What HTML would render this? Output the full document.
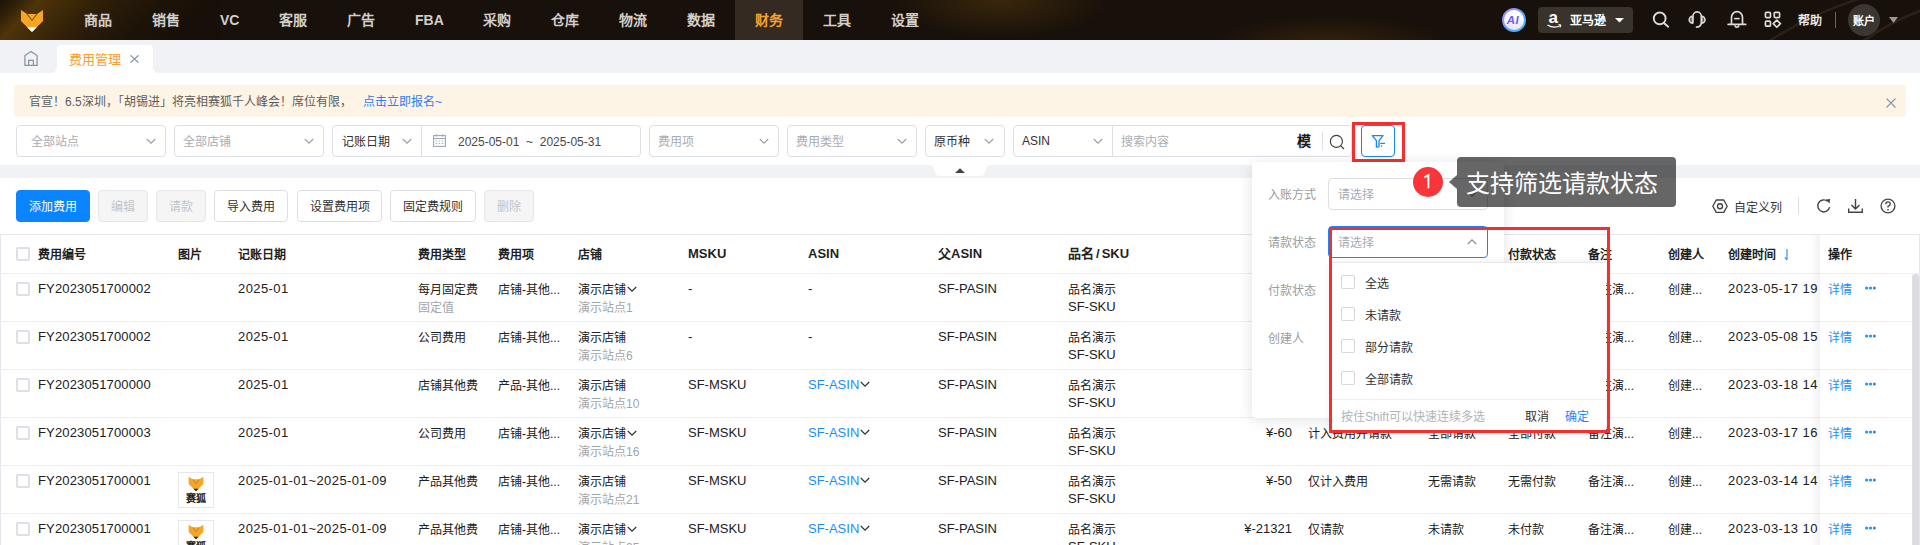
<!DOCTYPE html>
<html lang="zh-CN"><head><meta charset="utf-8">
<style>
*{box-sizing:border-box;margin:0;padding:0}
html,body{width:1920px;height:545px;overflow:hidden;background:#fff}
body{position:relative;font-family:"Liberation Sans",sans-serif;font-size:12px;color:#303133;line-height:1}
.a{position:absolute;white-space:nowrap}
.l{font-size:13px}
#nav{position:absolute;left:0;top:0;width:1920px;height:40px;background:
 radial-gradient(ellipse 110px 38px at 1000px 0px,rgba(85,58,14,.55),rgba(85,58,14,0)),
 radial-gradient(ellipse 120px 26px at 1330px 42px,rgba(80,56,16,.45),rgba(80,56,16,0)),
 #18100a;overflow:hidden}
.glow{position:absolute;left:0;top:0;width:220px;height:40px;background:linear-gradient(135deg,#1d1408 0%,#2e1f08 7%,#503409 15%,#432c09 24%,#2c1d08 42%,#1d1408 62%,#170f08 85%)}
.ni{position:absolute;top:0;height:40px;line-height:40px;font-size:14px;font-weight:bold;color:#d2cec9;padding:0 20px}
.ni.on{background:#352a21;color:#f6a22f}
#tabs{position:absolute;left:0;top:40px;width:1920px;height:33px;background:#f0f2f5}
.sel{position:absolute;top:125px;height:32px;border:1px solid #dcdfe6;border-radius:4px;background:#fff}
.ph{position:absolute;top:9px;left:14px;color:#a9acb2;font-size:12px;white-space:nowrap}
.chev{position:absolute;top:11px;width:9px;height:9px}
.btn{position:absolute;top:190px;height:32px;border:1px solid #dcdfe6;border-radius:4px;background:#fff;font-size:12px;color:#303133;text-align:center;line-height:32px;white-space:nowrap}
.btn.dis{background:#f5f5f6;border-color:#e4e6eb;color:#c0c4cc}
.hl{position:absolute;left:0;width:1920px;height:1px;background:#ebeef5}
.th{position:absolute;top:248px;font-weight:bold;font-size:12px;color:#1f1f1f;white-space:nowrap}
.cb{position:absolute;left:16px;width:14px;height:14px;border:2px solid #dde0e7;border-radius:2px;background:#fff}
.c{position:absolute;white-space:nowrap;color:#202020}
.g{color:#a3a5aa}
.d{letter-spacing:.4px}
.c.l{margin-top:-2px}
div.a,div.c,div.th,span.ph{padding-top:1px}
.bl{color:#1a8cff}
</style></head>
<body>
<!-- NAV -->
<div id="nav">
 <div class="glow"></div>
 <svg class="a" style="left:20px;top:9px" width="24" height="24" viewBox="0 0 24 24">
  <path d="M1 1 L7 5 L17 5 L23 1 L23 12 L12 23 L1 12 Z" fill="#f6a623"/>
  <path d="M7 5 L12 11.5 L17 5" fill="none" stroke="#4a3008" stroke-width="0.85"/>
  <path d="M7.2 18.2 H16.8 L12 23 Z" fill="#fff"/>
 </svg>
 <div class="ni" style="left:64px">商品</div>
 <div class="ni" style="left:132px">销售</div>
 <div class="ni" style="left:200px">VC</div>
 <div class="ni" style="left:259px">客服</div>
 <div class="ni" style="left:327px">广告</div>
 <div class="ni" style="left:395px">FBA</div>
 <div class="ni" style="left:463px">采购</div>
 <div class="ni" style="left:531px">仓库</div>
 <div class="ni" style="left:599px">物流</div>
 <div class="ni" style="left:667px">数据</div>
 <div class="ni on" style="left:735px">财务</div>
 <div class="ni" style="left:803px">工具</div>
 <div class="ni" style="left:871px">设置</div>

 <svg class="a" style="left:1700px;top:0" width="220" height="40" viewBox="0 0 220 40"><path d="M68 42 Q110 14 162 -2" fill="none" stroke="rgba(120,100,75,.2)" stroke-width="2.5"/><path d="M162 42 Q190 22 222 10" fill="none" stroke="rgba(120,100,75,.2)" stroke-width="3"/></svg>
 <div class="a" style="left:1502px;top:8px;width:24px;height:24px;border-radius:50%;background:linear-gradient(135deg,#b58cff,#5aa0ff 60%,#3ad0ff)"></div>
 <div class="a" style="left:1504px;top:10px;width:20px;height:20px;border-radius:50%;background:linear-gradient(180deg,#fff 30%,#e8e2ff)"></div>
 <div class="a" style="left:1507px;top:14px;font-size:11.5px;font-weight:bold;color:#6b5cf2;transform:skewX(-10deg);letter-spacing:.3px">AI</div>
 <div class="a" style="left:1538px;top:7px;width:95px;height:26px;border-radius:4px;background:#3a332b"></div>
 <div class="a" style="left:1548.5px;top:8px;font-size:17px;font-weight:bold;color:#fff">a</div>
 <svg class="a" style="left:1547px;top:24px" width="15" height="5" viewBox="0 0 15 5"><path d="M.5 1 Q7 5 13.5 1.5" fill="none" stroke="#fff" stroke-width="1.3"/><path d="M11.5 .5 L14 1 L13 3.5" fill="none" stroke="#fff" stroke-width="1"/></svg>
 <div class="a" style="left:1570px;top:14px;font-size:12px;font-weight:bold;color:#fff">亚马逊</div>
 <svg class="a" style="left:1615px;top:18px" width="9" height="5" viewBox="0 0 9 5"><path d="M0 0 H9 L4.5 4.5 Z" fill="#fff"/></svg>
 <svg class="a" style="left:1652px;top:11px" width="18" height="18" viewBox="0 0 18 18"><circle cx="7.7" cy="7.4" r="5.9" fill="none" stroke="#dedbd8" stroke-width="1.9"/><path d="M12 12 L16.2 15.7" stroke="#dedbd8" stroke-width="1.9" stroke-linecap="round"/></svg>
 <svg class="a" style="left:1687px;top:10px" width="20" height="19" viewBox="0 0 20 19"><path d="M5.7 6.3 A3.45 3.45 0 0 0 5.7 13.2 Z M14.5 6.3 A3.45 3.45 0 0 1 14.5 13.2 Z" fill="rgba(210,205,200,.35)" stroke="#dedbd8" stroke-width="1.6" stroke-linejoin="round"/><path d="M5.7 12 V7.2 A4.4 5.3 0 0 1 14.5 7.2 V12 Q14.5 16.8 9.5 17.2" fill="none" stroke="#dedbd8" stroke-width="1.7" stroke-linecap="round"/></svg>
 <svg class="a" style="left:1727px;top:9px" width="20" height="20" viewBox="0 0 20 20"><path d="M4.5 15 V8.5 A5.5 5.8 0 0 1 15.5 8.5 V15" fill="none" stroke="#dedbd8" stroke-width="1.7"/><path d="M1.2 15.4 H18.6" stroke="#dedbd8" stroke-width="1.8" stroke-linecap="round"/><path d="M8 16.3 A1.9 1.9 0 0 0 11.8 16.3" fill="none" stroke="#dedbd8" stroke-width="1.5"/><path d="M7.2 9.6 H12.6" stroke="#dedbd8" stroke-width="1.6"/></svg>
 <svg class="a" style="left:1763px;top:10px" width="20" height="20" viewBox="0 0 20 20"><rect x="2.45" y="2.35" width="5" height="5.2" rx="1" fill="none" stroke="#dedbd8" stroke-width="1.7"/><rect x="11.25" y="2.35" width="5.3" height="5.2" rx="1" fill="none" stroke="#dedbd8" stroke-width="1.7"/><rect x="2.45" y="11.15" width="5" height="5" rx="1" fill="none" stroke="#dedbd8" stroke-width="1.7"/><path d="M13.8 10.05 L17.4 13.65 L13.8 17.25 L10.2 13.65 Z" fill="none" stroke="#dedbd8" stroke-width="1.7" stroke-linejoin="round"/></svg>
 <div class="a" style="left:1798px;top:14px;font-size:12px;font-weight:bold;color:#e6e6e6">帮助</div>
 <div class="a" style="left:1835px;top:12px;width:1px;height:16px;background:#6a655f"></div>
 <div class="a" style="left:1848px;top:4px;width:32px;height:32px;border-radius:50%;background:#3b3630"></div>
 <div class="a" style="left:1852.5px;top:15px;font-size:11px;font-weight:bold;color:#fff">账户</div>
 <svg class="a" style="left:1889px;top:17px" width="9" height="6" viewBox="0 0 9 6"><path d="M0 0 H9 L4.5 6 Z" fill="#9a9895"/></svg>
</div>

<!-- TABS -->
<div id="tabs">
 <svg class="a" style="left:23px;top:10px" width="16" height="17" viewBox="0 0 16 17"><path d="M1.9 15.3 V5.6 L8 1.4 L14.1 5.6 V15.3 Z" fill="none" stroke="#8a93a2" stroke-width="1.25" stroke-linejoin="miter"/><path d="M5.6 15.3 V10.4 H10.4 V15.3" fill="none" stroke="#8a93a2" stroke-width="1.2"/></svg>
 <div class="a" style="left:57px;top:5px;width:96px;height:28px;background:#fff;border-radius:4px 4px 0 0"></div>
 <div class="a" style="left:69px;top:12px;color:#fa9d2c;font-size:13px">费用管理</div>
 <svg class="a" style="left:129.5px;top:15px" width="9" height="8" viewBox="0 0 9 8"><path d="M.5 .3 L8.5 7.7 M8.5 .3 L.5 7.7" stroke="#8290a3" stroke-width="1.1"/></svg>
 <div class="a" style="left:51px;top:27px;width:6px;height:6px;background:#fff"></div><div class="a" style="left:51px;top:27px;width:6px;height:6px;background:#f0f2f5;border-bottom-right-radius:6px"></div>
 <div class="a" style="left:153px;top:27px;width:6px;height:6px;background:#fff"></div><div class="a" style="left:153px;top:27px;width:6px;height:6px;background:#f0f2f5;border-bottom-left-radius:6px"></div>
</div>

<!-- BANNER -->
<div class="a" style="left:14px;top:85px;width:1892px;height:32px;background:#fef4e5;border-radius:3px"></div>
<div class="a" style="left:29px;top:95px;color:#5c5c5c">官宣！6.5深圳，「胡锡进」将亮相赛狐千人峰会！席位有限，</div>
<div class="a" style="left:363px;top:95px;color:#2d7df6">点击立即报名~</div>
<svg class="a" style="left:1886px;top:97.5px" width="10" height="10" viewBox="0 0 10 10"><path d="M.5 .5 L9.5 9.5 M9.5 .5 L.5 9.5" stroke="#8a96a8" stroke-width="1.1"/></svg>


<!-- FILTERS -->
<div class="sel" style="left:16px;width:150px"><span class="ph" style="left:14px">全部站点</span></div><svg class="a" style="left:146px;top:137.5px" width="10" height="7" viewBox="0 0 10 7"><path d="M.8 1 L5 5.2 L9.2 1" fill="none" stroke="#9a9ea6" stroke-width="1.1"/></svg>
<div class="sel" style="left:174px;width:150px"><span class="ph" style="left:8px">全部店铺</span></div><svg class="a" style="left:304px;top:137.5px" width="10" height="7" viewBox="0 0 10 7"><path d="M.8 1 L5 5.2 L9.2 1" fill="none" stroke="#9a9ea6" stroke-width="1.1"/></svg>
<div class="sel" style="left:332px;width:309px"><span class="ph" style="left:9px;color:#303133">记账日期</span><div class="a" style="left:88px;top:0;width:1px;height:30px;background:#dcdfe6"></div><span class="ph l" style="left:125px;color:#45484f;top:9px">2025-05-01 &nbsp;~&nbsp; 2025-05-31</span></div><svg class="a" style="left:402px;top:137.5px" width="10" height="7" viewBox="0 0 10 7"><path d="M.8 1 L5 5.2 L9.2 1" fill="none" stroke="#9a9ea6" stroke-width="1.1"/></svg>
<svg class="a" style="left:433px;top:134px" width="13" height="13" viewBox="0 0 13 13"><rect x=".6" y="1.6" width="11.8" height="10.8" fill="none" stroke="#9ea7b4" stroke-width="1.1"/><path d="M.6 4.5 H12.4 M3.5 .3 V2.6 M9.5 .3 V2.6" stroke="#9ea7b4" stroke-width="1.1"/><path d="M2.8 7 H4.2 M5.8 7 H7.2 M8.8 7 H10.2 M2.8 9.5 H4.2 M5.8 9.5 H7.2 M8.8 9.5 H10.2" stroke="#9ea7b4" stroke-width=".9"/></svg>
<div class="sel" style="left:649px;width:130px"><span class="ph" style="left:8px">费用项</span></div><svg class="a" style="left:759px;top:137.5px" width="10" height="7" viewBox="0 0 10 7"><path d="M.8 1 L5 5.2 L9.2 1" fill="none" stroke="#9a9ea6" stroke-width="1.1"/></svg>
<div class="sel" style="left:787px;width:130px"><span class="ph" style="left:8px">费用类型</span></div><svg class="a" style="left:897px;top:137.5px" width="10" height="7" viewBox="0 0 10 7"><path d="M.8 1 L5 5.2 L9.2 1" fill="none" stroke="#9a9ea6" stroke-width="1.1"/></svg>
<div class="sel" style="left:925px;width:80px"><span class="ph" style="left:8px;color:#303133">原币种</span></div><svg class="a" style="left:984px;top:137.5px" width="10" height="7" viewBox="0 0 10 7"><path d="M.8 1 L5 5.2 L9.2 1" fill="none" stroke="#9a9ea6" stroke-width="1.1"/></svg>
<div class="sel" style="left:1013px;width:339px"><span class="ph l" style="left:8px;color:#303133;top:8px">ASIN</span><div class="a" style="left:98px;top:0;width:1px;height:30px;background:#dcdfe6"></div><span class="ph" style="left:107px">搜索内容</span><span class="ph" style="left:283px;top:7px;font-size:14px;font-weight:bold;color:#1a1a1a">模</span><div class="a" style="left:308px;top:6px;width:1px;height:18px;background:#dcdfe6"></div></div><svg class="a" style="left:1093px;top:137.5px" width="10" height="7" viewBox="0 0 10 7"><path d="M.8 1 L5 5.2 L9.2 1" fill="none" stroke="#9a9ea6" stroke-width="1.1"/></svg>
<svg class="a" style="left:1329px;top:134px" width="17" height="17" viewBox="0 0 17 17"><circle cx="7.4" cy="7.4" r="6" fill="none" stroke="#3e3e3e" stroke-width="1.15"/><path d="M11.8 11.8 L15 15" stroke="#3e3e3e" stroke-width="1.2"/></svg>
<div class="a" style="left:1361px;top:125px;width:34px;height:32px;border:1px solid #1a84ff;border-radius:4px;background:#fff"></div>
<svg class="a" style="left:1369px;top:133px" width="17" height="17" viewBox="0 0 17 17"><path d="M3.3 2.6 H14 L10 7.6 V13.6 L7.4 14.2 V7.6 Z" fill="none" stroke="#1a84ff" stroke-width="1.3" stroke-linejoin="round"/><path d="M11.2 10.4 H16" stroke="#1a84ff" stroke-width="1.2"/><circle cx="12.6" cy="13" r=".8" fill="#1a84ff"/></svg>
<div class="a" style="left:1352px;top:122px;width:53px;height:40px;border:3px solid #f3302f"></div>

<!-- BAND -->
<div class="a" style="left:0;top:165px;width:1920px;height:13px;background:#f0f2f5"></div>
<svg class="a" style="left:929px;top:165px" width="62" height="11" viewBox="0 0 62 11"><path d="M0 0 H62 Q58 0 57 4 L56 8 Q55 11 51 11 H11 Q7 11 6 8 L5 4 Q4 0 0 0 Z" fill="#fff"/><path d="M26 8 L31 3.2 L36 8 Z" fill="#444"/></svg>

<!-- BUTTONS -->
<div class="btn" style="left:16px;width:74px;background:#0b84ff;border-color:#0b84ff;color:#fff">添加费用</div>
<div class="btn dis" style="left:98px;width:50px">编辑</div>
<div class="btn dis" style="left:156px;width:50px">请款</div>
<div class="btn" style="left:214px;width:74px">导入费用</div>
<div class="btn" style="left:297px;width:85px">设置费用项</div>
<div class="btn" style="left:390px;width:86px">固定费规则</div>
<div class="btn dis" style="left:484px;width:50px">删除</div>
<svg class="a" style="left:1712px;top:198.5px" width="16" height="15" viewBox="0 0 16 15"><path d="M4.2 1 H11.8 L15.2 7.2 L11.8 13.4 H4.2 L0.8 7.2 Z" fill="none" stroke="#444" stroke-width="1.35" stroke-linejoin="round"/><circle cx="8" cy="7.2" r="2.5" fill="none" stroke="#444" stroke-width="1.35"/></svg>
<div class="a" style="left:1734px;top:201px;color:#333">自定义列</div>
<div class="a" style="left:1798px;top:197px;width:1px;height:17px;background:#dcdfe6"></div>
<svg class="a" style="left:1816px;top:198px" width="16" height="16" viewBox="0 0 16 16"><path d="M13.6 9.2 A6 6 0 1 1 11.6 3.3" fill="none" stroke="#444" stroke-width="1.4"/><path d="M9.8 1.6 L14.2 0.9 L13.4 5.4 Z" fill="#444"/></svg>
<svg class="a" style="left:1847px;top:198px" width="17" height="16" viewBox="0 0 17 16"><path d="M8.5 1 V11 M4.5 7 L8.5 11 L12.5 7 M1.7 10.5 V14.3 H15.3 V10.5" fill="none" stroke="#444" stroke-width="1.45"/></svg>
<svg class="a" style="left:1880px;top:198px" width="16" height="16" viewBox="0 0 16 16"><circle cx="8" cy="8" r="6.9" fill="none" stroke="#444" stroke-width="1.35"/><path d="M5.8 6.2 Q5.8 3.8 8 3.8 Q10.2 3.8 10.2 5.9 Q10.2 7.3 8 8.3 V9.6" fill="none" stroke="#444" stroke-width="1.35"/><circle cx="8" cy="11.8" r=".85" fill="#444"/></svg>

<!-- TABLE -->
<div class="a" style="left:0;top:234px;width:1920px;height:1px;background:#e4e7ed"></div>
<div class="a" style="left:0;top:234px;width:1px;height:311px;background:#e4e7ed"></div>
<div class="a" style="left:1919px;top:234px;width:1px;height:311px;background:#e4e7ed"></div>
<div class="a" style="left:0;top:273px;width:1920px;height:1px;background:#ebeef5"></div>
<div class="a" style="left:0;top:321px;width:1912px;height:1px;background:#ebeef5"></div>
<div class="a" style="left:0;top:369px;width:1912px;height:1px;background:#ebeef5"></div>
<div class="a" style="left:0;top:417px;width:1912px;height:1px;background:#ebeef5"></div>
<div class="a" style="left:0;top:465px;width:1912px;height:1px;background:#ebeef5"></div>
<div class="a" style="left:0;top:513px;width:1912px;height:1px;background:#ebeef5"></div>
<div class="cb" style="top:247px"></div>
<div class="th" style="left:38px">费用编号</div>
<div class="th" style="left:178px">图片</div>
<div class="th" style="left:238px">记账日期</div>
<div class="th" style="left:418px">费用类型</div>
<div class="th" style="left:498px">费用项</div>
<div class="th" style="left:578px">店铺</div>
<div class="th" style="left:688px;font-size:13px;top:246px">MSKU</div>
<div class="th" style="left:808px;font-size:13px;top:246px">ASIN</div>
<div class="th" style="left:938px;font-size:13px;top:246px">父ASIN</div>
<div class="th" style="left:1068px;font-size:13px;top:246px">品名<span style="margin:0 2px">/</span>SKU</div>
<div class="th" style="left:1265px">金额</div>
<div class="th" style="left:1308px">入账方式</div>
<div class="th" style="left:1428px">请款状态</div>
<div class="th" style="left:1508px">付款状态</div>
<div class="th" style="left:1588px">备注</div>
<div class="th" style="left:1668px">创建人</div>
<div class="th" style="left:1728px">创建时间</div>
<div class="th" style="left:1828px">操作</div>
<svg class="a" style="left:1784px;top:249px" width="6" height="12" viewBox="0 0 6 12"><path d="M3 0 V10.5 M.8 8.3 L3 10.8" fill="none" stroke="#3a8ef6" stroke-width="1.2"/></svg>
<div class="cb" style="top:282px"></div>
<div class="c l" style="letter-spacing:.15px;left:38px;top:283px">FY2023051700002</div>
<div class="c l d" style="left:238px;top:283px">2025-01</div>
<div class="c" style="left:418px;top:283px">每月固定费</div>
<div class="c g" style="left:418px;top:301px">固定值</div>
<div class="c" style="left:498px;top:283px">店铺-其他...</div>
<div class="c" style="left:578px;top:283px">演示店铺<svg width="10" height="7" viewBox="0 0 10 7" style="margin-left:1px;vertical-align:1px"><path d="M.8 1 L5 5.2 L9.2 1" fill="none" stroke="#303133" stroke-width="1.2"/></svg></div>
<div class="c g" style="left:578px;top:301px">演示站点1</div>
<div class="c l" style="left:688px;top:283px">-</div>
<div class="c l" style="left:808px;top:283px">-</div>
<div class="c l" style="left:938px;top:283px">SF-PASIN</div>
<div class="c" style="left:1068px;top:283px">品名演示</div>
<div class="c l" style="left:1068px;top:301px">SF-SKU</div>
<div class="c" style="left:1588px;top:283px">备注演...</div>
<div class="c" style="left:1668px;top:283px">创建...</div>
<div class="c l d" style="left:1728px;top:283px">2023-05-17 19</div>
<div class="cb" style="top:330px"></div>
<div class="c l" style="letter-spacing:.15px;left:38px;top:331px">FY2023051700002</div>
<div class="c l d" style="left:238px;top:331px">2025-01</div>
<div class="c" style="left:418px;top:331px">公司费用</div>
<div class="c" style="left:498px;top:331px">店铺-其他...</div>
<div class="c" style="left:578px;top:331px">演示店铺</div>
<div class="c g" style="left:578px;top:349px">演示站点6</div>
<div class="c l" style="left:688px;top:331px">-</div>
<div class="c l" style="left:808px;top:331px">-</div>
<div class="c l" style="left:938px;top:331px">SF-PASIN</div>
<div class="c" style="left:1068px;top:331px">品名演示</div>
<div class="c l" style="left:1068px;top:349px">SF-SKU</div>
<div class="c" style="left:1588px;top:331px">备注演...</div>
<div class="c" style="left:1668px;top:331px">创建...</div>
<div class="c l d" style="left:1728px;top:331px">2023-05-08 15</div>
<div class="cb" style="top:378px"></div>
<div class="c l" style="letter-spacing:.15px;left:38px;top:379px">FY2023051700000</div>
<div class="c l d" style="left:238px;top:379px">2025-01</div>
<div class="c" style="left:418px;top:379px">店铺其他费</div>
<div class="c" style="left:498px;top:379px">产品-其他...</div>
<div class="c" style="left:578px;top:379px">演示店铺</div>
<div class="c g" style="left:578px;top:397px">演示站点10</div>
<div class="c l" style="left:688px;top:379px">SF-MSKU</div>
<div class="c l bl" style="left:808px;top:379px">SF-ASIN<svg width="10" height="7" viewBox="0 0 10 7" style="margin-left:1px;vertical-align:1px"><path d="M.8 1 L5 5.2 L9.2 1" fill="none" stroke="#303133" stroke-width="1.2"/></svg></div>
<div class="c l" style="left:938px;top:379px">SF-PASIN</div>
<div class="c" style="left:1068px;top:379px">品名演示</div>
<div class="c l" style="left:1068px;top:397px">SF-SKU</div>
<div class="c" style="left:1588px;top:379px">备注演...</div>
<div class="c" style="left:1668px;top:379px">创建...</div>
<div class="c l d" style="left:1728px;top:379px">2023-03-18 14</div>
<div class="cb" style="top:426px"></div>
<div class="c l" style="letter-spacing:.15px;left:38px;top:427px">FY2023051700003</div>
<div class="c l d" style="left:238px;top:427px">2025-01</div>
<div class="c" style="left:418px;top:427px">公司费用</div>
<div class="c" style="left:498px;top:427px">店铺-其他...</div>
<div class="c" style="left:578px;top:427px">演示店铺<svg width="10" height="7" viewBox="0 0 10 7" style="margin-left:1px;vertical-align:1px"><path d="M.8 1 L5 5.2 L9.2 1" fill="none" stroke="#303133" stroke-width="1.2"/></svg></div>
<div class="c g" style="left:578px;top:445px">演示站点16</div>
<div class="c l" style="left:688px;top:427px">SF-MSKU</div>
<div class="c l bl" style="left:808px;top:427px">SF-ASIN<svg width="10" height="7" viewBox="0 0 10 7" style="margin-left:1px;vertical-align:1px"><path d="M.8 1 L5 5.2 L9.2 1" fill="none" stroke="#303133" stroke-width="1.2"/></svg></div>
<div class="c l" style="left:938px;top:427px">SF-PASIN</div>
<div class="c" style="left:1068px;top:427px">品名演示</div>
<div class="c l" style="left:1068px;top:445px">SF-SKU</div>
<div class="c l" style="right:628px;top:427px">¥-60</div>
<div class="c" style="left:1308px;top:427px">计入费用并请款</div>
<div class="c" style="left:1428px;top:427px">全部请款</div>
<div class="c" style="left:1508px;top:427px">全部付款</div>
<div class="c" style="left:1588px;top:427px">备注演...</div>
<div class="c" style="left:1668px;top:427px">创建...</div>
<div class="c l d" style="left:1728px;top:427px">2023-03-17 16</div>
<div class="cb" style="top:474px"></div>
<div class="c l" style="letter-spacing:.15px;left:38px;top:475px">FY2023051700001</div>
<div class="a" style="left:178px;top:472px;width:36px;height:36px;border:1px solid #e4e7ed;background:#fff"></div>
<svg class="a" style="left:188px;top:476px" width="16" height="16" viewBox="0 0 24 24"><path d="M1 1 L7 5 L17 5 L23 1 L23 12 L12 23 L1 12 Z" fill="#f6a623"/><path d="M7 5 L12 11.5 L17 5" fill="none" stroke="#b07010" stroke-width="1"/><path d="M8 19 L16 19 L12 23 Z" fill="#222"/></svg>
<div class="a" style="left:186px;top:493px;font-size:10px;font-weight:bold;color:#222">赛狐</div>
<div class="c l d" style="left:238px;top:475px">2025-01-01~2025-01-09</div>
<div class="c" style="left:418px;top:475px">产品其他费</div>
<div class="c" style="left:498px;top:475px">店铺-其他...</div>
<div class="c" style="left:578px;top:475px">演示店铺</div>
<div class="c g" style="left:578px;top:493px">演示站点21</div>
<div class="c l" style="left:688px;top:475px">SF-MSKU</div>
<div class="c l bl" style="left:808px;top:475px">SF-ASIN<svg width="10" height="7" viewBox="0 0 10 7" style="margin-left:1px;vertical-align:1px"><path d="M.8 1 L5 5.2 L9.2 1" fill="none" stroke="#303133" stroke-width="1.2"/></svg></div>
<div class="c l" style="left:938px;top:475px">SF-PASIN</div>
<div class="c" style="left:1068px;top:475px">品名演示</div>
<div class="c l" style="left:1068px;top:493px">SF-SKU</div>
<div class="c l" style="right:628px;top:475px">¥-50</div>
<div class="c" style="left:1308px;top:475px">仅计入费用</div>
<div class="c" style="left:1428px;top:475px">无需请款</div>
<div class="c" style="left:1508px;top:475px">无需付款</div>
<div class="c" style="left:1588px;top:475px">备注演...</div>
<div class="c" style="left:1668px;top:475px">创建...</div>
<div class="c l d" style="left:1728px;top:475px">2023-03-14 14</div>
<div class="cb" style="top:522px"></div>
<div class="c l" style="letter-spacing:.15px;left:38px;top:523px">FY2023051700001</div>
<div class="a" style="left:178px;top:520px;width:36px;height:36px;border:1px solid #e4e7ed;background:#fff"></div>
<svg class="a" style="left:188px;top:524px" width="16" height="16" viewBox="0 0 24 24"><path d="M1 1 L7 5 L17 5 L23 1 L23 12 L12 23 L1 12 Z" fill="#f6a623"/><path d="M7 5 L12 11.5 L17 5" fill="none" stroke="#b07010" stroke-width="1"/><path d="M8 19 L16 19 L12 23 Z" fill="#222"/></svg>
<div class="a" style="left:186px;top:541px;font-size:10px;font-weight:bold;color:#222">赛狐</div>
<div class="c l d" style="left:238px;top:523px">2025-01-01~2025-01-09</div>
<div class="c" style="left:418px;top:523px">产品其他费</div>
<div class="c" style="left:498px;top:523px">店铺-其他...</div>
<div class="c" style="left:578px;top:523px">演示店铺<svg width="10" height="7" viewBox="0 0 10 7" style="margin-left:1px;vertical-align:1px"><path d="M.8 1 L5 5.2 L9.2 1" fill="none" stroke="#303133" stroke-width="1.2"/></svg></div>
<div class="c g" style="left:578px;top:541px">演示站点25</div>
<div class="c l" style="left:688px;top:523px">SF-MSKU</div>
<div class="c l bl" style="left:808px;top:523px">SF-ASIN<svg width="10" height="7" viewBox="0 0 10 7" style="margin-left:1px;vertical-align:1px"><path d="M.8 1 L5 5.2 L9.2 1" fill="none" stroke="#303133" stroke-width="1.2"/></svg></div>
<div class="c l" style="left:938px;top:523px">SF-PASIN</div>
<div class="c" style="left:1068px;top:523px">品名演示</div>
<div class="c l" style="left:1068px;top:541px">SF-SKU</div>
<div class="c l" style="right:628px;top:523px">¥-21321</div>
<div class="c" style="left:1308px;top:523px">仅请款</div>
<div class="c" style="left:1428px;top:523px">未请款</div>
<div class="c" style="left:1508px;top:523px">未付款</div>
<div class="c" style="left:1588px;top:523px">备注演...</div>
<div class="c" style="left:1668px;top:523px">创建...</div>
<div class="c l d" style="left:1728px;top:523px">2023-03-13 10</div>
<div class="a" style="left:1810px;top:235px;width:10px;height:310px;background:linear-gradient(90deg,rgba(0,0,0,0),rgba(0,0,0,.05))"></div>
<div class="a" style="left:1820px;top:235px;width:99px;height:310px;background:#fff"></div>
<div class="th" style="left:1828px">操作</div>
<div class="a" style="left:1820px;top:273px;width:99px;height:1px;background:#ebeef5"></div>
<div class="c bl" style="left:1828px;top:283px">详情</div>
<svg class="a" style="left:1865px;top:286px" width="11" height="4" viewBox="0 0 11 4"><circle cx="1.6" cy="2" r="1.5" fill="#1a8cff"/><circle cx="5.5" cy="2" r="1.5" fill="#1a8cff"/><circle cx="9.4" cy="2" r="1.5" fill="#1a8cff"/></svg>
<div class="a" style="left:1820px;top:321px;width:92px;height:1px;background:#ebeef5"></div>
<div class="c bl" style="left:1828px;top:331px">详情</div>
<svg class="a" style="left:1865px;top:334px" width="11" height="4" viewBox="0 0 11 4"><circle cx="1.6" cy="2" r="1.5" fill="#1a8cff"/><circle cx="5.5" cy="2" r="1.5" fill="#1a8cff"/><circle cx="9.4" cy="2" r="1.5" fill="#1a8cff"/></svg>
<div class="a" style="left:1820px;top:369px;width:92px;height:1px;background:#ebeef5"></div>
<div class="c bl" style="left:1828px;top:379px">详情</div>
<svg class="a" style="left:1865px;top:382px" width="11" height="4" viewBox="0 0 11 4"><circle cx="1.6" cy="2" r="1.5" fill="#1a8cff"/><circle cx="5.5" cy="2" r="1.5" fill="#1a8cff"/><circle cx="9.4" cy="2" r="1.5" fill="#1a8cff"/></svg>
<div class="a" style="left:1820px;top:417px;width:92px;height:1px;background:#ebeef5"></div>
<div class="c bl" style="left:1828px;top:427px">详情</div>
<svg class="a" style="left:1865px;top:430px" width="11" height="4" viewBox="0 0 11 4"><circle cx="1.6" cy="2" r="1.5" fill="#1a8cff"/><circle cx="5.5" cy="2" r="1.5" fill="#1a8cff"/><circle cx="9.4" cy="2" r="1.5" fill="#1a8cff"/></svg>
<div class="a" style="left:1820px;top:465px;width:92px;height:1px;background:#ebeef5"></div>
<div class="c bl" style="left:1828px;top:475px">详情</div>
<svg class="a" style="left:1865px;top:478px" width="11" height="4" viewBox="0 0 11 4"><circle cx="1.6" cy="2" r="1.5" fill="#1a8cff"/><circle cx="5.5" cy="2" r="1.5" fill="#1a8cff"/><circle cx="9.4" cy="2" r="1.5" fill="#1a8cff"/></svg>
<div class="a" style="left:1820px;top:513px;width:92px;height:1px;background:#ebeef5"></div>
<div class="c bl" style="left:1828px;top:523px">详情</div>
<svg class="a" style="left:1865px;top:526px" width="11" height="4" viewBox="0 0 11 4"><circle cx="1.6" cy="2" r="1.5" fill="#1a8cff"/><circle cx="5.5" cy="2" r="1.5" fill="#1a8cff"/><circle cx="9.4" cy="2" r="1.5" fill="#1a8cff"/></svg>
<div class="a" style="left:1912px;top:274px;width:7px;height:271px;background:#dcdde1;border-radius:3px 3px 0 0"></div>

<!-- POPOVER -->
<div class="a" style="left:1252px;top:162px;width:252px;height:256px;background:#fff;border-radius:4px;box-shadow:0 2px 14px rgba(0,0,0,.12)"></div>
<div class="a" style="left:1268px;top:188px;color:#9a9ca1">入账方式</div>
<div class="a" style="left:1268px;top:236px;color:#9a9ca1">请款状态</div>
<div class="a" style="left:1268px;top:284px;color:#9a9ca1">付款状态</div>
<div class="a" style="left:1268px;top:332px;color:#9a9ca1">创建人</div>
<div class="a" style="left:1328px;top:178px;width:160px;height:32px;border:1px solid #dcdfe6;border-radius:4px;background:#fff"></div>
<div class="a" style="left:1338px;top:188px;color:#a9acb2">请选择</div>
<svg class="a" style="left:1467px;top:191px" width="10" height="7" viewBox="0 0 10 7"><path d="M.8 1 L5 5.2 L9.2 1" fill="none" stroke="#8d9095" stroke-width="1.2"/></svg>
<div class="a" style="left:1328px;top:226px;width:160px;height:32px;border:1px solid #1a84ff;border-radius:4px;background:#fff"></div>
<div class="a" style="left:1338px;top:236px;color:#a9acb2">请选择</div>
<svg class="a" style="left:1467px;top:238px" width="10" height="7" viewBox="0 0 10 7"><path d="M.8 6 L5 1.8 L9.2 6" fill="none" stroke="#8d9095" stroke-width="1.2"/></svg>
<div class="a" style="left:1332px;top:262px;width:274px;height:168px;background:#fff;border-top:1px solid #e6e8ed;box-shadow:0 2px 10px rgba(0,0,0,.1)"></div>
<div class="a" style="left:1341px;top:275px;width:14px;height:14px;border:1px solid #d5d8de;border-radius:2px;background:#fff"></div>
<div class="a" style="left:1365px;top:277px;color:#303133">全选</div>
<div class="a" style="left:1341px;top:307px;width:14px;height:14px;border:1px solid #d5d8de;border-radius:2px;background:#fff"></div>
<div class="a" style="left:1365px;top:309px;color:#303133">未请款</div>
<div class="a" style="left:1341px;top:339px;width:14px;height:14px;border:1px solid #d5d8de;border-radius:2px;background:#fff"></div>
<div class="a" style="left:1365px;top:341px;color:#303133">部分请款</div>
<div class="a" style="left:1341px;top:371px;width:14px;height:14px;border:1px solid #d5d8de;border-radius:2px;background:#fff"></div>
<div class="a" style="left:1365px;top:373px;color:#303133">全部请款</div>
<div class="a" style="left:1332px;top:399px;width:274px;height:1px;background:#ebeef5"></div>
<div class="a" style="left:1341px;top:410px;color:#b0b3b8">按住Shift可以快速连续多选</div>
<div class="a" style="left:1525px;top:410px;color:#303133">取消</div>
<div class="a" style="left:1565px;top:410px;color:#1a84ff">确定</div>
<div class="a" style="left:1329px;top:227px;width:281px;height:206px;border:3px solid #f3302f"></div>
<div class="a" style="left:1413px;top:167px;width:30px;height:30px;border-radius:50%;background:#f8363a"></div>
<svg class="a" style="left:1420px;top:172px" width="14" height="18" viewBox="0 0 14 18"><path d="M4.4 5.4 L8.4 3.2 V16.2" fill="none" stroke="#fff" stroke-width="1.9" stroke-linejoin="miter"/></svg>
<svg class="a" style="left:1449px;top:175px" width="8" height="14" viewBox="0 0 8 14"><path d="M8 0 L0 7 L8 14 Z" fill="rgba(0,0,0,.6)"/></svg>
<div class="a" style="left:1457px;top:157px;width:219px;height:50px;border-radius:4px;background:rgba(0,0,0,.6)"></div>
<div class="a" style="left:1466px;top:171px;font-size:24px;color:#fff">支持筛选请款状态</div>

</body></html>
